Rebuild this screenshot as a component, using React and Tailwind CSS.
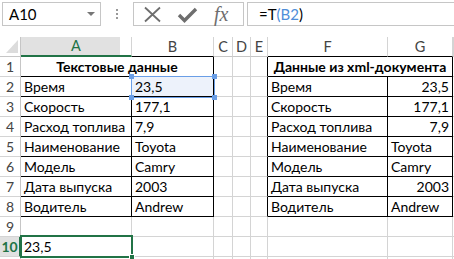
import React from "react";

const colW = ["w-[21px]", "w-[111px]", "w-[82px]", "w-[19px]", "w-[18px]", "w-[17px]", "w-[120px]", "w-[65px]", "w-[1px]"];
const letters = ["", "A", "B", "C", "D", "E", "F", "G", ""];

const rowsData = {
  1: { A: "Текстовые данные", F: "Данные из xml-документа" },
  2: { A: "Время", B: "23,5", F: "Время", G: "23,5" },
  3: { A: "Скорость", B: "177,1", F: "Скорость", G: "177,1" },
  4: { A: "Расход топлива", B: "7,9", F: "Расход топлива", G: "7,9" },
  5: { A: "Наименование", B: "Toyota", F: "Наименование", G: "Toyota" },
  6: { A: "Модель", B: "Camry", F: "Модель", G: "Camry" },
  7: { A: "Дата выпуска", B: "2003", F: "Дата выпуска", G: "2003" },
  8: { A: "Водитель", B: "Andrew", F: "Водитель", G: "Andrew" },
  9: {},
  10: { A: "23,5" },
  11: {},
};
const rightAligned = { G: ["2", "3", "4", "7"] };

function inTable(r, c) {
  if (r < 1 || r > 8) return false;
  return c === 1 || c === 2 || c === 6 || c === 7;
}

function Cell({ r, c }) {
  const L = letters[c];
  const txt = rowsData[r] && rowsData[r][L];
  const rightBlack = inTable(r, c) || inTable(r, c + 1);
  const bottomBlack = inTable(r, c) || inTable(r + 1, c);
  const mergedRow1 = r === 1 && (c === 1 || c === 6);
  const right = rightBlack ? "border-r-black" : "border-r-[#d4d4d4]";
  const bottom = bottomBlack ? "border-b-black" : "border-b-[#d4d4d4]";
  if (r === 1 && (c === 2 || c === 7)) return null;
  const isRight = rightAligned[L] && rightAligned[L].includes(String(r));
  const isB2 = r === 2 && c === 2;
  let width = colW[c];
  if (mergedRow1 && c === 1) width = "w-[193px]";
  if (mergedRow1 && c === 6) width = "w-[185px]";
  return (
    <div
      className={`${width} shrink-0 h-[20px] border-r border-b ${right} ${bottom} flex items-center overflow-visible whitespace-nowrap ${
        mergedRow1 ? "justify-center font-bold" : isRight ? "justify-end pr-[3px]" : "pl-[3px]"
      } ${isB2 ? "bg-[#edf2fb]" : ""}`}
    >
      {txt ? <span className="leading-none">{txt}</span> : null}
    </div>
  );
}

function Row({ r }) {
  const sel = r === 10;
  return (
    <div className="flex h-[20px]">
      <div
        className={`w-[21px] shrink-0 h-[20px] border-r border-b border-b-[#d4d4d4] flex items-center justify-center text-[14px] ${
          sel ? "bg-[#e1e1e1] text-[#217346] font-bold border-r-[#217346] border-r-2" : "text-[#444] border-r-[#c6c6c6]"
        }`}
      >
        {r <= 10 ? r : ""}
      </div>
      {[1, 2, 3, 4, 5, 6, 7, 8].map((c) => (
        <Cell key={c} r={r} c={c} />
      ))}
    </div>
  );
}

export default function App() {
  return (
    <div
      className="relative w-[454px] h-[259px] overflow-hidden bg-white text-black text-[14px]"
      style={{ fontFamily: "Lato, 'Liberation Sans', sans-serif" }}
    >
      {/* toolbar */}
      <div className="flex h-[37px] items-start">
        <div className="ml-[2px] mt-[2px] w-[99px] h-[24px] border border-[#c6c6c6] flex items-center justify-between pl-[6px] pr-[5px]">
          <span className="text-[15px] text-black">A10</span>
          <svg width="8" height="5" viewBox="0 0 8 5">
            <path d="M0 0 L8 0 L4 4 Z" fill="#777" />
          </svg>
        </div>
        <div className="w-[32px] h-[28px] flex flex-col items-center justify-center gap-[2px]">
          <div className="w-[2px] h-[2px] bg-[#999]" />
          <div className="w-[2px] h-[2px] bg-[#999]" />
          <div className="w-[2px] h-[2px] bg-[#999]" />
        </div>
        <div className="mt-[2px] w-[111px] h-[24px] border border-[#c6c6c6] flex items-center">
          <svg className="ml-[9px]" width="19" height="17" viewBox="0 0 19 17">
            <path d="M2 1.5 L17 15.5 M17 1.5 L2 15.5" stroke="#6e6e6e" strokeWidth="1.8" />
          </svg>
          <svg className="ml-[15px]" width="21" height="17" viewBox="0 0 21 17">
            <path d="M2 9 L7.5 14.5 L19 3" stroke="#6e6e6e" strokeWidth="3.4" fill="none" />
          </svg>
          <span
            className="ml-[16px] text-[20px] text-[#6e6e6e] italic"
            style={{ fontFamily: "'Liberation Serif', serif" }}
          >
            fx
          </span>
        </div>
        <div className="ml-[3px] mt-[2px] flex-1 h-[24px] border border-r-0 border-[#c6c6c6] flex items-center pl-[11px] text-[15px]">
          <span>=T</span>
          <span className="text-[#4e8ed9]">(B2</span>
          <span>)</span>
        </div>
      </div>

      {/* column headers */}
      <div className="flex h-[20px]">
        <div className="w-[21px] shrink-0 h-[20px] border-r border-b border-[#c6c6c6] relative">
          <svg className="absolute left-[6px] top-[3px]" width="12" height="13" viewBox="0 0 12 13">
            <path d="M12 0 L12 13 L0 13 Z" fill="#dcdcdc" />
          </svg>
        </div>
        {[1, 2, 3, 4, 5, 6, 7, 8].map((c) => {
          const isA = c === 1;
          const blackBottom = c === 2 || c === 6 || c === 7;
          return (
            <div
              key={c}
              className={`${colW[c]} shrink-0 h-[20px] border-r border-r-[#d4d4d4] flex items-center justify-center text-[14.5px] ${
                isA
                  ? "border-b-2 border-b-[#217346] text-[#217346] bg-[linear-gradient(to_right,#e1e1e1_99px,#ffffff_99px)]"
                  : blackBottom
                  ? "border-b border-b-black text-[#444]"
                  : "border-b border-b-[#c6c6c6] text-[#444]"
              }`}
            >
              {letters[c]}
            </div>
          );
        })}
      </div>

      {/* rows */}
      {[1, 2, 3, 4, 5, 6, 7, 8, 9, 10, 11].map((r) => (
        <Row key={r} r={r} />
      ))}

      {/* B2 reference highlight */}
      <div className="absolute left-[131px] top-[76px] w-[84px] h-[22px] border border-[#6a9ee6]" />
      <div className="absolute left-[129px] top-[74px] w-[5px] h-[5px] bg-[#6a9ee6]" />
      <div className="absolute left-[212px] top-[74px] w-[5px] h-[5px] bg-[#6a9ee6]" />
      <div className="absolute left-[129px] top-[95px] w-[5px] h-[5px] bg-[#6a9ee6]" />
      <div className="absolute left-[212px] top-[95px] w-[5px] h-[5px] bg-[#6a9ee6]" />

      {/* A10 selection */}
      <div className="absolute left-[20px] top-[235px] w-[113px] h-[23px] border-2 border-[#217346]" />
      <div className="absolute left-[129px] top-[254px] w-[6px] h-[6px] bg-[#217346] border border-white" />
    </div>
  );
}
